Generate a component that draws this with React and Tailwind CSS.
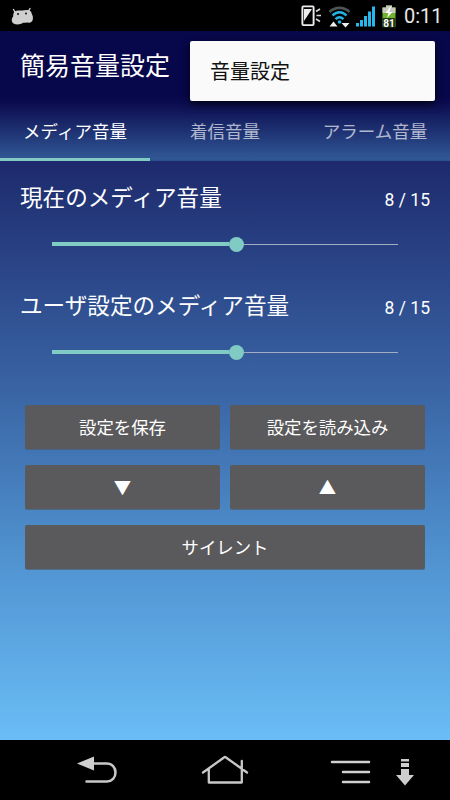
import React, { useState } from "react";

const tabs = ["メディア音量", "着信音量", "アラーム音量"];
const MAX_VOLUME = 15;

function StatusBar() {
  return (
    <div className="flex h-[31px] items-center justify-between bg-black pl-[11px] pr-2">
      <svg width="24" height="18" viewBox="0 0 24 18" fill="#cfcfcf">
        <path d="M2.500 2.500 4.500 6M19 1.500 17 5" stroke="#cfcfcf" strokeWidth="1.400" strokeLinecap="round" />
        <path d="M3.500 4.500C6 3 8.500 3.500 11 3.500s5-1 7.500 0c1.800 1 2.200 2.500 2.500 4 1.100 1.500 1.300 4.500.3 6.500-1 1.700-3.300 2-5.300 1.600-1.500.3-3 .3-4 .2-2.500 2-7 2.200-9.500.6C.3 15 .2 11.500 2.200 9.500c0-1.500 0-3.500 1.300-5Z" />
        <circle cx="7" cy="7" r="1" fill="#111" />
        <circle cx="15" cy="6.500" r="1" fill="#111" />
      </svg>
      <div className="flex items-center">
        <svg width="102" height="26" viewBox="-3 0 102 26" fill="none">
          {/* silent / vibrate phone */}
          <rect x="1.400" y="3.400" width="11.200" height="18.700" rx="1" stroke="#eee" strokeWidth="1.900" />
          <path d="M3 6H11L3 18Z" fill="#eee" />
          <path d="m15 8.500 4-2.500M15.500 12.500H20M15 16l4 2.500" stroke="#ddd" strokeWidth="1.500" />
          {/* wifi */}
          <path d="M28.500 9c5.500-5.500 14.500-5.500 20 0" stroke="#4b5357" strokeWidth="2.600" />
          <path d="M31.500 12.500c4.200-4.500 10-4.500 14 0M34.500 16.200c2.500-2.400 5.500-2.400 8 0" stroke="#23b4e5" strokeWidth="2.500" />
          <circle cx="38.500" cy="19" r="1.800" fill="#23b4e5" />
          <path d="m28.500 23.500 4-5 4 5ZM40.500 20h8l-4 4.500Z" fill="#eee" />
          {/* signal */}
          <path d="M55 20h3v3.500h-3ZM59 17h3v6.500h-3ZM63 13h3v10.500h-3ZM67 8.500h3v15h-3ZM71 3.500h3v20h-3Z" fill="#27b7ea" />
          {/* battery */}
          <path d="M85 2.500h6v2h3.500v19.500h-13V4.500H85Z" fill="#71b32f" />
          <path d="M85 2.500h6v2h3.500v5.500h-13V4.500H85Z" fill="#c3c9bd" />
          <path d="m89.500 3.500-5 6.500h3L86 15l5.500-6h-3.200L90 3.500Z" fill="#fff" />
          <rect x="81.500" y="15" width="13" height="9.500" fill="#243916" />
          <text x="88" y="23.500" textAnchor="middle" fill="#fff" fontSize="10" fontWeight="700" fontFamily="Roboto, sans-serif">81</text>
        </svg>
        <span className="ml-[4px] w-[38px] whitespace-nowrap font-[Roboto,sans-serif] text-[20px] leading-none text-[#e8e8e8]">0:11</span>
      </div>
    </div>
  );
}

function VolumeSection({ title, value }) {
  const percent = (value / MAX_VOLUME) * 100;

  return (
    <section className="h-[108px]">
      <div className="flex h-[34px] items-center justify-between px-5 text-white">
        <h2 className="text-[22.6px] leading-[22px]">{title}</h2>
        <span className="pt-[7px] font-[Roboto,sans-serif] text-[17.5px] leading-none">
          {value} / {MAX_VOLUME}
        </span>
      </div>
      <div className="mx-[52px] mt-[22px] flex h-4 items-center">
        <div className="h-1 bg-[#80cbc4]" style={{ width: `calc(${percent}% - 8px)` }} />
        <div className="h-[15px] w-[15px] shrink-0 rounded-full bg-[#80cbc4]" />
        <div className="h-px flex-1 bg-[#a3abc5]" />
      </div>
    </section>
  );
}

function Button({ children, className = "" }) {
  return (
    <button className={`flex h-11 items-center justify-center rounded-[2px] bg-[#5a5a5c] pb-px text-[17.4px] leading-none text-white shadow-[0_1px_0_rgba(80,85,95,0.6)] ${className}`}>
      {children}
    </button>
  );
}

function NavBar() {
  return (
    <nav className="flex h-[60px] items-center bg-black pl-[76px]">
      <svg width="42" height="34" viewBox="0 0 42 34" fill="none">
        <path d="M17 10.500h14c5 0 8.500 4 8.500 9s-3.500 9-8.500 9H10.500" stroke="#c8c8c8" strokeWidth="2.500" strokeLinecap="round" />
        <path d="m1 10.500 17-7v14Z" fill="#cfcfcf" />
      </svg>
      <svg className="ml-[82px]" width="50" height="34" viewBox="0 0 50 34" fill="none" stroke="#c8c8c8" strokeWidth="2.300" strokeLinecap="round" strokeLinejoin="round">
        <path d="M3 19.500 24 4.500q1-1 2 0l21 15M8.800 16v13.500h33V8M41.800 16v13" />
      </svg>
      <svg className="ml-[80px]" width="42" height="34" viewBox="0 0 42 34" fill="none" stroke="#d0d0d0" strokeWidth="2.500" strokeLinecap="round">
        <path d="M2 9h37M13 19h26M13 29h26" />
      </svg>
      <svg className="ml-[23px]" width="20" height="34" viewBox="0 0 20 34" fill="#cdcdcd">
        <path d="M6 6h8v2.500H6ZM6 10h8v4H6ZM6 16h8v6h5l-9 10.500L1 22h5Z" />
      </svg>
    </nav>
  );
}

export default function App() {
  const [activeTab, setActiveTab] = useState(0);

  return (
    <div className="relative flex h-[800px] w-[450px] flex-col overflow-hidden font-['Noto_Sans_CJK_JP',sans-serif]">
      <StatusBar />

      <header className="h-[130px] bg-[linear-gradient(#07074b_0px,#07074b_65px,#0b0c4f_72px,#315795_128px,#294f8f_130px)]">
        <div className="flex h-[70px] items-center pb-[3px] pl-5">
          <h1 className="text-[25px] leading-none text-white">簡易音量設定</h1>
        </div>
        <div className="grid h-[60px] grid-cols-3">
          {tabs.map((tab, index) => (
            <button
              key={tab}
              onClick={() => setActiveTab(index)}
              className={`flex items-center justify-center whitespace-nowrap border-b-[3px] pt-[2px] text-[17.5px] leading-none ${
                index === activeTab ? "border-[#80cbc4] text-white" : "border-transparent text-white/65"
              }`}
            >
              {tab}
            </button>
          ))}
        </div>
      </header>

      <main className="flex-1 bg-[linear-gradient(#1d2a6d,#3a65a5_40%,#5296d4_71%,#6abdf6)] pt-[19px]">
        <VolumeSection title="現在のメディア音量" value={8} />
        <VolumeSection title="ユーザ設定のメディア音量" value={8} />
        <div className="mx-[25px] mt-[9px] grid grid-cols-2 gap-x-2.5 gap-y-4">
          <Button>設定を保存</Button>
          <Button>設定を読み込み</Button>
          <Button className="pb-[3px]">▼</Button>
          <Button className="pb-[3px]">▲</Button>
          <Button className="col-span-2">サイレント</Button>
        </div>
      </main>

      <NavBar />

      {/* overflow menu */}
      <div className="absolute left-[190px] top-[41px] flex h-[60px] w-[245px] items-center rounded-[2px] bg-[#fafafa] pl-5 text-[20px] leading-none text-[#111] shadow-[0_3px_9px_rgba(0,0,0,0.75)]">
        音量設定
      </div>
    </div>
  );
}
